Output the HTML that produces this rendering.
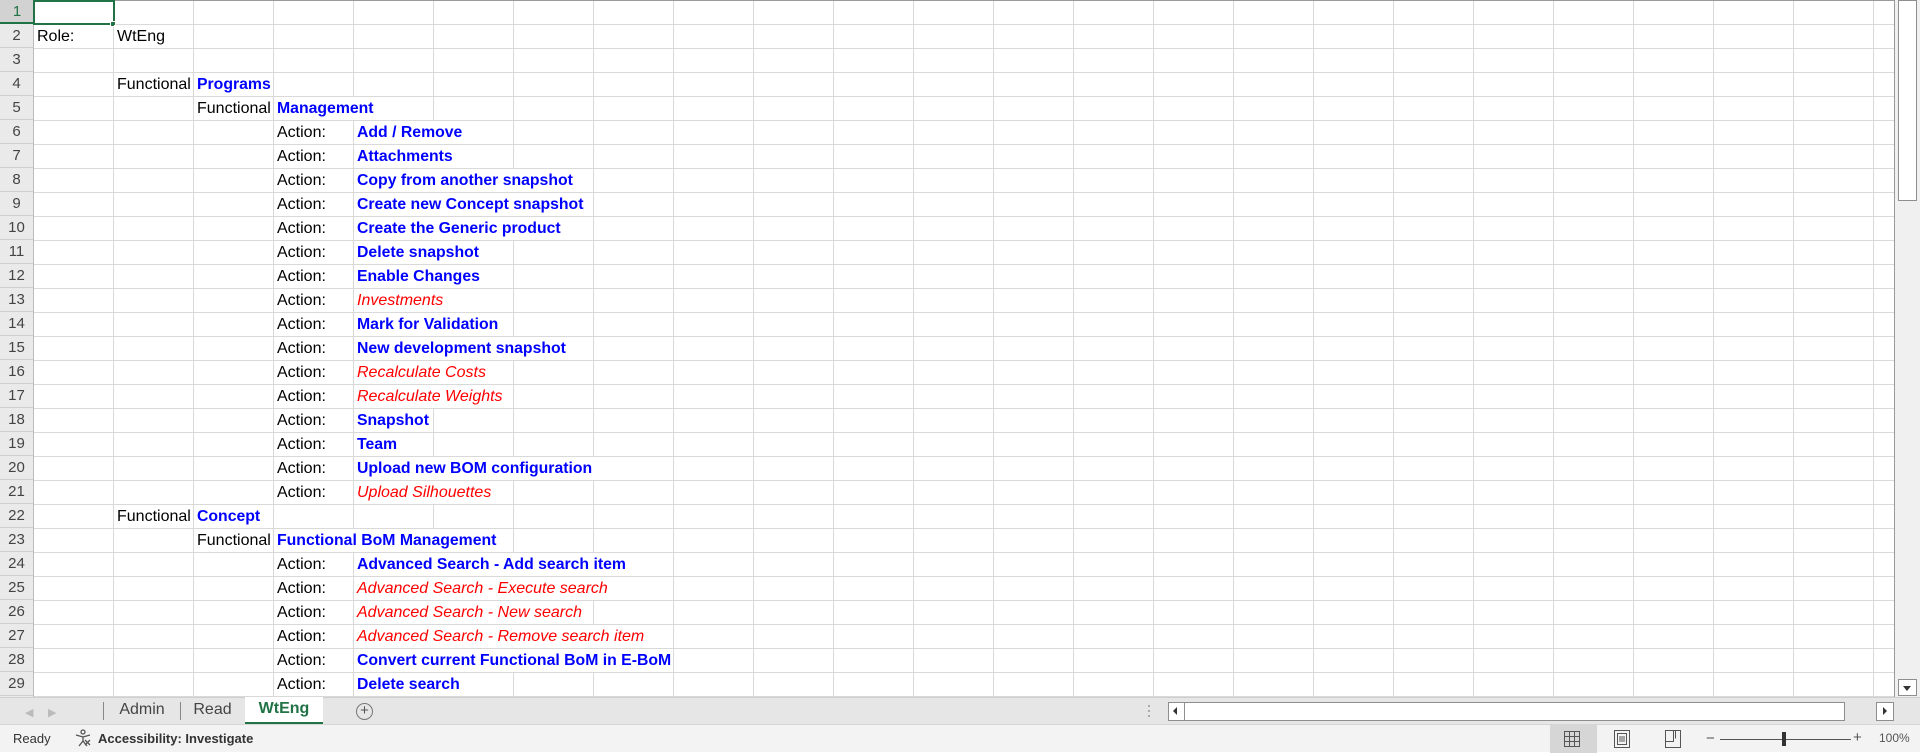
<!DOCTYPE html>
<html><head><meta charset="utf-8"><style>
*{margin:0;padding:0;box-sizing:border-box}
body{width:1920px;height:752px;overflow:hidden;background:#fff;font-family:"Liberation Sans",sans-serif;position:relative}
#grid{position:absolute;left:0;top:0;width:1895px;height:697px;overflow:hidden;border-top:1px solid #9a9a9a;border-right:1px solid #9a9a9a;
background:
repeating-linear-gradient(to right,transparent 0 79px,#d9d9d9 79px 80px) 34px 0/1861px 100% no-repeat,
repeating-linear-gradient(to bottom,transparent 0 23px,#d9d9d9 23px 24px) 0 0/100% 100%;
}
#rh{position:absolute;left:0;top:0;width:34px;height:697px;background:#eaeaea;border-right:1px solid #bdbdbd}
.rn{position:absolute;left:0;width:33px;height:24px;line-height:24px;text-align:center;font-size:15px;color:#444;border-bottom:1px solid #cfcfcf}
.c{position:absolute;height:23px;line-height:24px;font-size:16px;color:#000;padding-left:3px;padding-right:2px;background:#fff;white-space:nowrap}
.b{color:#0000ff;font-weight:bold;font-size:15.8px}
.r{color:#ff0000;font-style:italic}
#tabs{position:absolute;left:0;top:697px;width:1920px;height:27px;background:#e6e6e6;border-top:1px solid #cfcfcf}
#status{position:absolute;left:0;top:724px;width:1920px;height:28px;background:#f3f3f3;border-top:1px solid #d6d6d6;font-size:13px;color:#333}
.tab{position:absolute;top:0;height:26px;line-height:24px;font-size:16px;color:#444;text-align:center}
</style></head><body>
<div id="grid"></div>
<div id="rh">
<div class="rn" style="top:0;background:#d2d2d2;color:#217346;border-bottom:2px solid #217346;width:34px">1</div>
<div class="rn" style="top:24px">2</div><div class="rn" style="top:48px">3</div><div class="rn" style="top:72px">4</div><div class="rn" style="top:96px">5</div><div class="rn" style="top:120px">6</div><div class="rn" style="top:144px">7</div><div class="rn" style="top:168px">8</div><div class="rn" style="top:192px">9</div><div class="rn" style="top:216px">10</div><div class="rn" style="top:240px">11</div><div class="rn" style="top:264px">12</div><div class="rn" style="top:288px">13</div><div class="rn" style="top:312px">14</div><div class="rn" style="top:336px">15</div><div class="rn" style="top:360px">16</div><div class="rn" style="top:384px">17</div><div class="rn" style="top:408px">18</div><div class="rn" style="top:432px">19</div><div class="rn" style="top:456px">20</div><div class="rn" style="top:480px">21</div><div class="rn" style="top:504px">22</div><div class="rn" style="top:528px">23</div><div class="rn" style="top:552px">24</div><div class="rn" style="top:576px">25</div><div class="rn" style="top:600px">26</div><div class="rn" style="top:624px">27</div><div class="rn" style="top:648px">28</div><div class="rn" style="top:672px">29</div>
</div>
<div style="position:absolute;left:33px;top:0;width:82px;height:25px;border:2px solid #217346"></div>
<div style="position:absolute;left:110px;top:21px;width:6px;height:6px;background:#217346;border:1px solid #fff"></div>

<div class="c" style="left:34px;top:25px">Role:</div>
<div class="c" style="left:114px;top:25px">WtEng</div>
<div class="c" style="left:114px;top:73px">Functional</div><div class="c b" style="left:194px;top:73px">Programs</div>
<div class="c" style="left:194px;top:97px">Functional</div><div class="c b" style="left:274px;top:97px">Management</div>
<div class="c" style="left:274px;top:121px">Action:</div><div class="c b" style="left:354px;top:121px">Add / Remove</div>
<div class="c" style="left:274px;top:145px">Action:</div><div class="c b" style="left:354px;top:145px">Attachments</div>
<div class="c" style="left:274px;top:169px">Action:</div><div class="c b" style="left:354px;top:169px">Copy from another snapshot</div>
<div class="c" style="left:274px;top:193px">Action:</div><div class="c b" style="left:354px;top:193px">Create new Concept snapshot</div>
<div class="c" style="left:274px;top:217px">Action:</div><div class="c b" style="left:354px;top:217px">Create the Generic product</div>
<div class="c" style="left:274px;top:241px">Action:</div><div class="c b" style="left:354px;top:241px">Delete snapshot</div>
<div class="c" style="left:274px;top:265px">Action:</div><div class="c b" style="left:354px;top:265px">Enable Changes</div>
<div class="c" style="left:274px;top:289px">Action:</div><div class="c r" style="left:354px;top:289px">Investments</div>
<div class="c" style="left:274px;top:313px">Action:</div><div class="c b" style="left:354px;top:313px">Mark for Validation</div>
<div class="c" style="left:274px;top:337px">Action:</div><div class="c b" style="left:354px;top:337px">New development snapshot</div>
<div class="c" style="left:274px;top:361px">Action:</div><div class="c r" style="left:354px;top:361px">Recalculate Costs</div>
<div class="c" style="left:274px;top:385px">Action:</div><div class="c r" style="left:354px;top:385px">Recalculate Weights</div>
<div class="c" style="left:274px;top:409px">Action:</div><div class="c b" style="left:354px;top:409px">Snapshot</div>
<div class="c" style="left:274px;top:433px">Action:</div><div class="c b" style="left:354px;top:433px">Team</div>
<div class="c" style="left:274px;top:457px">Action:</div><div class="c b" style="left:354px;top:457px">Upload new BOM configuration</div>
<div class="c" style="left:274px;top:481px">Action:</div><div class="c r" style="left:354px;top:481px">Upload Silhouettes</div>
<div class="c" style="left:114px;top:505px">Functional</div><div class="c b" style="left:194px;top:505px">Concept</div>
<div class="c" style="left:194px;top:529px">Functional</div><div class="c b" style="left:274px;top:529px">Functional BoM Management</div>
<div class="c" style="left:274px;top:553px">Action:</div><div class="c b" style="left:354px;top:553px">Advanced Search - Add search item</div>
<div class="c" style="left:274px;top:577px">Action:</div><div class="c r" style="left:354px;top:577px">Advanced Search - Execute search</div>
<div class="c" style="left:274px;top:601px">Action:</div><div class="c r" style="left:354px;top:601px">Advanced Search - New search</div>
<div class="c" style="left:274px;top:625px">Action:</div><div class="c r" style="left:354px;top:625px">Advanced Search - Remove search item</div>
<div class="c" style="left:274px;top:649px">Action:</div><div class="c b" style="left:354px;top:649px">Convert current Functional BoM in E-BoM</div>
<div class="c" style="left:274px;top:673px">Action:</div><div class="c b" style="left:354px;top:673px">Delete search</div>

<div style="position:absolute;left:1895px;top:0;width:25px;height:697px;background:#f0f0f0"></div>
<div style="position:absolute;left:1898px;top:0;width:19px;height:201px;background:#fff;border:1px solid #8e8e8e"></div>
<div style="position:absolute;left:1898px;top:679px;width:19px;height:17px;background:#fff;border:1px solid #8e8e8e"></div>
<div style="position:absolute;left:1903px;top:686px;width:0;height:0;border-left:4px solid transparent;border-right:4px solid transparent;border-top:5px solid #333"></div>

<div id="tabs">
<div style="position:absolute;left:25px;top:8px;color:#bbb;font-size:11px">◀</div>
<div style="position:absolute;left:48px;top:8px;color:#bbb;font-size:11px">▶</div>
<div style="position:absolute;left:103px;top:4px;width:1px;height:18px;background:#888"></div>
<div class="tab" style="left:104px;width:76px">Admin</div>
<div style="position:absolute;left:180px;top:4px;width:1px;height:18px;background:#888"></div>
<div class="tab" style="left:181px;width:63px">Read</div>
<div class="tab" style="left:245px;width:78px;background:#fff;color:#217346;font-weight:bold;border-bottom:2px solid #217346;top:-1px;height:27px">WtEng</div>
<div style="position:absolute;left:356px;top:5px;width:17px;height:17px;border:1px solid #777;border-radius:50%;text-align:center;line-height:14px;color:#555;font-size:15px">+</div>
<div style="position:absolute;left:1148px;top:7px;width:2px;height:2px;background:#aaa;box-shadow:0 5px 0 #aaa,0 10px 0 #aaa"></div>
<div style="position:absolute;left:1168px;top:4px;width:677px;height:19px;background:#fff;border:1px solid #8e8e8e"></div>
<div style="position:absolute;left:1168px;top:4px;width:17px;height:19px;border:1px solid #8e8e8e;background:#fff"></div>
<div style="position:absolute;left:1173px;top:9px;border-top:4px solid transparent;border-bottom:4px solid transparent;border-right:4px solid #333"></div>
<div style="position:absolute;left:1876px;top:4px;width:18px;height:19px;border:1px solid #8e8e8e;background:#fff"></div>
<div style="position:absolute;left:1883px;top:9px;border-top:4px solid transparent;border-bottom:4px solid transparent;border-left:4px solid #333"></div>
</div>

<div id="status">
<div style="position:absolute;left:13px;top:6px">Ready</div>
<svg style="position:absolute;left:74px;top:4px" width="18" height="18" viewBox="0 0 18 18" fill="none" stroke="#555" stroke-width="1.3"><circle cx="9" cy="3" r="2"/><path d="M2 6l7 2 7-2M9 8v4l-4 5M9 12l4 5M11 11l5 5M16 11l-5 5"/></svg>
<div style="position:absolute;left:98px;top:6px;font-weight:bold">Accessibility: Investigate</div>
<div style="position:absolute;left:1550px;top:0;width:47px;height:28px;background:#d6d6d6"></div>
<svg style="position:absolute;left:1564px;top:6px" width="16" height="16" viewBox="0 0 16 16" fill="none" stroke="#555"><rect x=".5" y=".5" width="15" height="15"/><path d="M5.5 0v16M10.5 0v16M0 5.5h16M0 10.5h16"/></svg>
<svg style="position:absolute;left:1614px;top:5px" width="16" height="18" viewBox="0 0 16 18" fill="none" stroke="#555"><rect x=".5" y=".5" width="15" height="17"/><rect x="3.5" y="3.5" width="9" height="11"/><path d="M5 7h6M5 9h6M5 11h6"/></svg>
<svg style="position:absolute;left:1665px;top:5px" width="16" height="18" viewBox="0 0 16 18" fill="none" stroke="#555"><path d="M.5 .5h15v17H.5zM.5 11.5h8V.5M10.5 .5v8"/></svg>
<div style="position:absolute;left:1706px;top:5px;font-size:15px;color:#555">−</div>
<div style="position:absolute;left:1720px;top:14px;width:131px;height:1px;background:#555"></div>
<div style="position:absolute;left:1782px;top:7px;width:4px;height:14px;background:#333"></div>
<div style="position:absolute;left:1853px;top:4px;font-size:15px;color:#555">+</div>
<div style="position:absolute;left:1879px;top:6px;font-size:12px;color:#555">100%</div>
</div>
</body></html>
